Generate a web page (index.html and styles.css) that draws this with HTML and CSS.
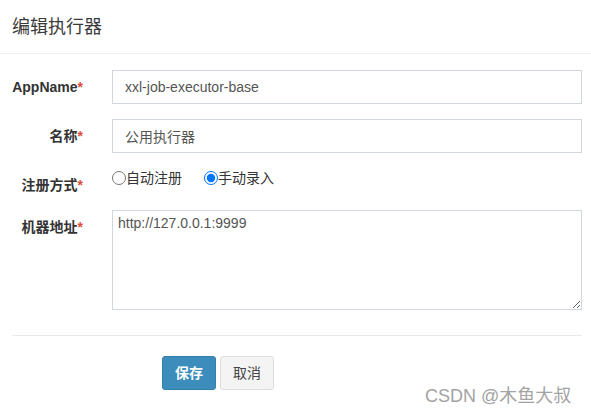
FILE: index.html
```html
<!DOCTYPE html>
<html lang="zh">
<head>
<meta charset="utf-8">
<title>编辑执行器</title>
<link rel="stylesheet" href="styles.css">
</head>
<body>
<div class="modal">
  <div class="modal-header">
    <h4 class="modal-title">编辑执行器</h4>
  </div>
  <form class="modal-body">
    <div class="form-row">
      <label class="form-label">AppName<span class="req">*</span></label>
      <div class="form-field"><input class="form-input" type="text" value="xxl-job-executor-base"></div>
    </div>
    <div class="form-row">
      <label class="form-label">名称<span class="req">*</span></label>
      <div class="form-field"><input class="form-input" type="text" value="公用执行器"></div>
    </div>
    <div class="form-row">
      <label class="form-label">注册方式<span class="req">*</span></label>
      <div class="form-field radio-group">
        <label class="radio-item"><input class="radio" type="radio" name="type">自动注册</label>
        <label class="radio-item radio-item-second"><input class="radio" type="radio" name="type" checked>手动录入</label>
      </div>
    </div>
    <div class="form-row">
      <label class="form-label">机器地址<span class="req">*</span></label>
      <div class="form-field"><textarea class="form-textarea">http://127.0.0.1:9999</textarea></div>
    </div>
  </form>
  <div class="divider"></div>
  <div class="actions">
    <button class="btn btn-primary" type="button">保存</button>
    <button class="btn btn-default" type="button">取消</button>
  </div>
</div>
<div class="watermark">CSDN @木鱼大叔</div>
</body>
</html>
```
FILE: styles.css
```css
html, body {
  margin: 0;
  padding: 0;
  background: #fff;
}
body {
  font-family: "Liberation Sans", "Noto Sans CJK SC", sans-serif;
  font-size: 14px;
  color: #333;
  width: 591px;
  height: 415px;
  position: relative;
  overflow: hidden;
}
.modal {
  display: flex;
  flex-direction: column;
}
.modal-header {
  border-bottom: 1px solid #f0f0f0;
  display: flex;
  align-items: center;
  padding: 0 12px;
  box-sizing: border-box;
  height: 54px;
}
.modal-title {
  margin: 0;
  font-size: 18px;
  font-weight: normal;
  line-height: 20px;
  color: #3a3a3a;
}
.modal-body {
  margin: 0;
  padding: 16px 9px 25px 12px;
  display: flex;
  flex-direction: column;
  gap: 15px;
}
.form-row {
  display: grid;
  grid-template-columns: 71px 1fr;
  column-gap: 29px;
  align-items: start;
}
.form-label {
  text-align: right;
  font-weight: bold;
  padding-top: 7px;
  line-height: 20px;
  color: #333;
  white-space: nowrap;
}
.req {
  color: #dd4b39;
}
.form-input {
  display: block;
  width: 100%;
  height: 34px;
  box-sizing: border-box;
  border: 1px solid #d2d6de;
  border-radius: 0;
  padding: 6px 12px;
  font-family: "Liberation Sans", "Noto Sans CJK SC", sans-serif;
  font-size: 14px;
  color: #555;
  background: #fff;
  outline: none;
}
.radio-group {
  display: flex;
  align-items: center;
  height: 20px;
  line-height: 20px;
  color: #333;
}
.radio-item {
  display: flex;
  align-items: center;
}
.radio-item-second {
  margin-left: 22px;
}
.radio {
  width: 14px;
  height: 14px;
  margin: 0 0 0 0;
}
.form-textarea {
  display: block;
  width: 100%;
  height: 100px;
  box-sizing: border-box;
  border: 1px solid #d2d6de;
  border-radius: 0;
  padding: 3px 5px;
  font-family: "Liberation Sans", "Noto Sans CJK SC", sans-serif;
  font-size: 14px;
  line-height: 18px;
  color: #555;
  background: #fff;
  outline: none;
}
.divider {
  height: 1px;
  background: #eaeaea;
  margin: 0 9px 0 12px;
}
.actions {
  display: flex;
  gap: 4px;
  padding: 20px 0 0 162px;
}
.btn {
  height: 34px;
  padding: 6px 12px;
  box-sizing: border-box;
  border-radius: 3px;
  font-family: "Liberation Sans", "Noto Sans CJK SC", sans-serif;
  font-size: 14px;
  line-height: 20px;
  cursor: pointer;
}
.btn-primary {
  background: #3c8dbc;
  border: 1px solid #367fa9;
  color: #fff;
  font-weight: bold;
}
.btn-default {
  background: #f4f4f4;
  border: 1px solid #ddd;
  color: #444;
}
.watermark {
  position: absolute;
  left: 425px;
  top: 385px;
  font-size: 18px;
  line-height: 22px;
  color: #a3a3a3;
  white-space: nowrap;
}
```
